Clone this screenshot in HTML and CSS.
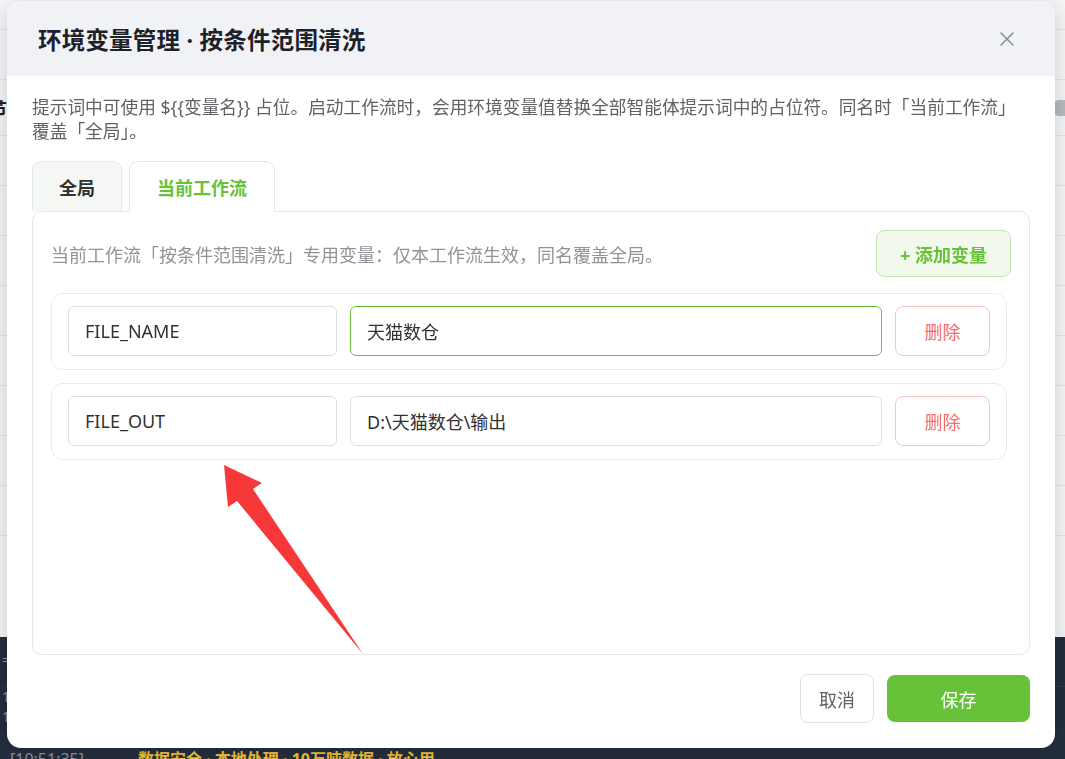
FILE: index.html
```html
<!DOCTYPE html>
<html lang="zh-CN">
<head>
    <meta charset="UTF-8">
    <meta name="viewport" content="width=device-width, initial-scale=1.0">
    <title>环境变量管理</title>
    <link rel="stylesheet" href="styles.css">
</head>
<body>
    <!-- workflow editor behind the modal -->
    <div class="app">
        <div class="app-main">
            <div class="app-bar"></div>
            <div class="list-row"></div>
            <div class="list-row with-title"><span class="list-title">节</span><span class="scroll-pill"></span></div>
            <div class="list-row"></div>
            <div class="list-row"></div>
            <div class="list-row"></div>
            <div class="list-row"></div>
            <div class="list-row"></div>
            <div class="list-row"></div>
            <div class="list-row"></div>
            <div class="list-row"></div>
        </div>
        <div class="log-panel">
            <div class="log-tabs">=</div>
            <div class="log-line">1</div>
            <div class="log-line">1</div>
            <div class="log-line"><span class="log-time">[10:51:35]</span><span class="log-msg">数据安全 · 本地处理 · 10万吨数据 · 放心用</span></div>
        </div>
    </div>

    <div class="modal">
        <div class="modal-header">
            <h1>环境变量管理 · 按条件范围清洗</h1>
            <button class="modal-close" aria-label="关闭">
                <svg width="16" height="16" viewBox="0 0 16 16"><path d="M2 2 L14 14 M14 2 L2 14" stroke="#8c9199" stroke-width="1.6" stroke-linecap="round"/></svg>
            </button>
        </div>

        <div class="modal-body">
            <p class="modal-desc">提示词中可使用 ${{变量名}} 占位。启动工作流时，会用环境变量值替换全部智能体提示词中的占位符。同名时「当前工作流」覆盖「全局」。</p>

            <div class="tabs">
                <button class="tab">全局</button>
                <button class="tab active">当前工作流</button>
            </div>

            <div class="tab-panel">
                <div class="panel-head">
                    <span class="panel-hint">当前工作流「按条件范围清洗」专用变量：仅本工作流生效，同名覆盖全局。</span>
                    <button class="btn-add">+ 添加变量</button>
                </div>

                <div class="var-list">
                    <div class="var-row">
                        <input class="var-input" type="text" value="FILE_NAME">
                        <input class="var-input focused" type="text" value="天猫数仓">
                        <button class="btn-delete">删除</button>
                    </div>
                    <div class="var-row">
                        <input class="var-input" type="text" value="FILE_OUT">
                        <input class="var-input" type="text" value="D:\天猫数仓\输出">
                        <button class="btn-delete">删除</button>
                    </div>
                </div>
            </div>
        </div>

        <div class="modal-footer">
            <button class="btn-cancel">取消</button>
            <button class="btn-save">保存</button>
        </div>
    </div>

    <!-- annotation arrow -->
    <svg class="pointer-arrow" width="1065" height="759" viewBox="0 0 1065 759">
        <polygon points="224,465 262,483 253,489 363,654 237,501 228,507" fill="#f63838"/>
    </svg>
</body>
</html>
```

FILE: styles.css
```css
* {
    box-sizing: border-box;
}

body {
    margin: 0;
    padding: 0;
    font-family: "Noto Sans", "Noto Sans CJK SC", sans-serif;
    background: #f4f5f7;
    height: 100vh;
    overflow: hidden;
}

button, input {
    font-family: inherit;
}

/* background app */
.app {
    height: 100vh;
    display: flex;
    flex-direction: column;
    overflow: hidden;
}

.app-main {
    flex: 1;
    background: #f6f7f9;
}

.app-bar {
    height: 30px;
    border-bottom: 1px solid #e3e5e8;
}

.list-row {
    height: 50px;
    border-bottom: 1px solid #e3e5e8;
    position: relative;
}

.list-row.with-title {
    display: flex;
    align-items: center;
    height: 56px;
}

.list-title {
    margin-left: -11px;
    font-weight: 700;
    font-size: 18px;
    color: #1d2129;
}

.scroll-pill {
    position: absolute;
    right: 0;
    top: 20px;
    width: 12px;
    height: 16px;
    border-radius: 6px 0 0 6px;
    background: #b8bcc2;
}

.log-panel {
    height: 122px;
    flex-shrink: 0;
    background: #252e3f;
    color: #8a93a3;
    font-size: 14px;
    padding-left: 2px;
    overflow: hidden;
}

.log-tabs {
    height: 50px;
    line-height: 46px;
    border-bottom: 1px solid #313b4e;
}

.log-line {
    height: 20px;
    line-height: 20px;
    white-space: nowrap;
}

.log-line:last-child {
    margin-top: 22px;
    font-size: 16px;
}

.log-time {
    padding-left: 8px;
    margin-right: 54px;
}

.log-msg {
    color: #f2c230;
    font-weight: 700;
}

/* modal */
.modal {
    position: fixed;
    left: 7px;
    top: 1px;
    width: 1048px;
    background: #ffffff;
    border-radius: 14px;
    box-shadow: 0 4px 24px rgba(0, 0, 0, 0.18);
    overflow: hidden;
}

.modal-header {
    height: 75px;
    background: #f0f2f5;
    display: flex;
    align-items: center;
    justify-content: space-between;
    padding: 0 40px 0 31px;
}

.modal-header h1 {
    margin: 0;
    font-size: 23.5px;
    font-weight: 700;
    color: #1d2129;
    letter-spacing: 0.2px;
}

.modal-close {
    border: none;
    background: none;
    padding: 0;
    width: 16px;
    height: 16px;
    cursor: pointer;
}

.modal-body {
    padding: 19px 25px 0;
}

.modal-desc {
    margin: 0;
    font-size: 17.7px;
    line-height: 24px;
    color: #606266;
}

.tabs {
    display: flex;
    gap: 7px;
    margin-top: 18px;
    position: relative;
    z-index: 1;
}

.tab {
    height: 50px;
    padding: 0 26px;
    border: 1px solid #e4e7ed;
    border-bottom: none;
    border-radius: 9px 9px 0 0;
    background: #f5f7f5;
    font-size: 18px;
    font-weight: 600;
    color: #303133;
    cursor: pointer;
}

.tab.active {
    height: 51px;
    margin-bottom: -1px;
    padding: 0 27px;
    background: #ffffff;
    color: #67c23a;
}

.tab-panel {
    height: 444px;
    border: 1px solid #e4e7ed;
    border-radius: 10px;
    padding: 18px 18px 0;
}

.panel-head {
    display: flex;
    align-items: center;
    justify-content: space-between;
}

.panel-hint {
    font-size: 18px;
    color: #909399;
}

.btn-add {
    width: 135px;
    height: 47px;
    border: 1px solid #c2e7b0;
    border-radius: 8px;
    background: #f0f9eb;
    color: #67c23a;
    font-size: 18px;
    font-weight: 700;
    cursor: pointer;
}

.var-list {
    margin-top: 16px;
    margin-right: 4px;
    display: flex;
    flex-direction: column;
    gap: 13px;
}

.var-row {
    display: grid;
    grid-template-columns: 269px 1fr 95px;
    gap: 13px;
    padding: 12px 16px 13px;
    border: 1px solid #e8eaed;
    border-radius: 12px;
}

.var-input {
    height: 50px;
    border: 1px solid #dcdfe6;
    border-radius: 6px;
    padding: 0 16px;
    font-size: 18px;
    color: #303133;
    outline: none;
}

.var-input.focused {
    border-color: #67c23a;
}

.btn-delete {
    height: 50px;
    border: 1px solid #fbc4c4;
    border-radius: 8px;
    background: #ffffff;
    color: #f56c6c;
    font-size: 18px;
    cursor: pointer;
}

.modal-footer {
    display: flex;
    justify-content: flex-end;
    align-items: center;
    gap: 13px;
    padding: 19px 25px 25px;
}

.btn-cancel {
    width: 74px;
    height: 49px;
    border: 1px solid #dcdfe6;
    border-radius: 8px;
    background: #ffffff;
    color: #606266;
    font-size: 18px;
    cursor: pointer;
}

.btn-save {
    width: 143px;
    height: 47px;
    border: none;
    border-radius: 8px;
    background: #67c23a;
    color: #ffffff;
    font-size: 18px;
    cursor: pointer;
}

.pointer-arrow {
    position: fixed;
    left: 0;
    top: 0;
    pointer-events: none;
}
```
